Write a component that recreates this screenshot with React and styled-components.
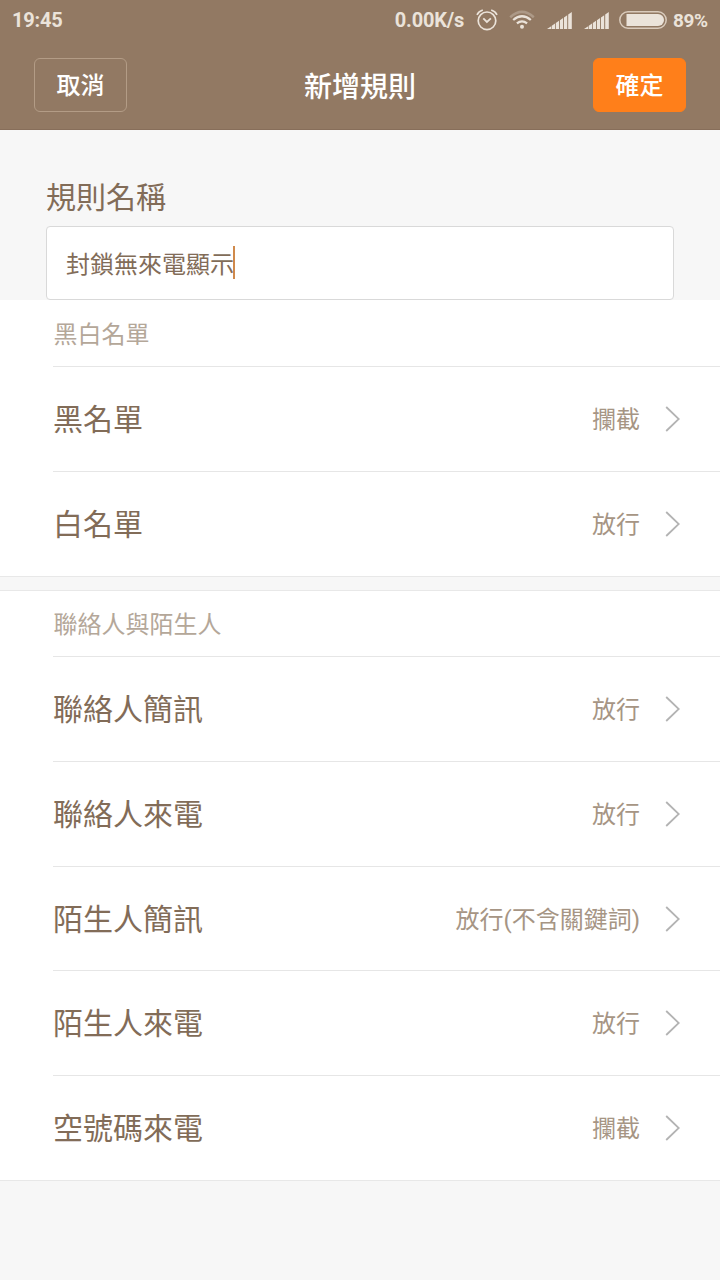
/*
 App.jsx: "New rule" screen of the call and SMS blocking settings.
 Status bar, title bar with the two actions, the rule name field and the rule lists.
 */

import React from 'react';
import styled, { createGlobalStyle } from 'styled-components';

const GlobalStyle = createGlobalStyle`
  * {
    box-sizing: border-box;
  }

  body {
    margin: 0;
    background: #f7f7f7;
    font-family: Roboto, 'Noto Sans CJK TC', sans-serif;
  }
`;

// - Data -

const sections = [
  {
    title: '黑白名單',
    rows: [
      { label: '黑名單', value: '攔截' },
      { label: '白名單', value: '放行' },
    ],
  },
  {
    title: '聯絡人與陌生人',
    rows: [
      { label: '聯絡人簡訊', value: '放行' },
      { label: '聯絡人來電', value: '放行' },
      { label: '陌生人簡訊', value: '放行(不含關鍵詞)' },
      { label: '陌生人來電', value: '放行' },
      { label: '空號碼來電', value: '攔截' },
    ],
  },
];

// - Styled Components -

const Screen = styled.div`
  width: 720px;
  height: 1280px;
  overflow: hidden;
  background: #f7f7f7;
`;

const Header = styled.header`
  height: 130px;
  background: #927963;
  border-bottom: 1px solid #876e5a;
`;

const StatusBar = styled.div`
  display: flex;
  align-items: center;
  justify-content: space-between;
  height: 40px;
  padding: 0 12px;
  color: #ebe3da;
  font-size: 20px;
  font-weight: 700;
  line-height: 41px;
`;

const StatusText = styled.span`
  white-space: nowrap;
  letter-spacing: -0.2px;
`;

const BatteryLevel = styled(StatusText)`
  width: 35px;
  margin-left: 6px;
  font-size: 19px;
  letter-spacing: -0.4px;
`;

const StatusGroup = styled.div`
  display: flex;
  align-items: center;
`;

const StatusIcon = styled.svg`
  display: block;
  flex: none;
  margin-left: ${props => props.$gap || 0}px;
`;

const TitleBar = styled.div`
  display: flex;
  align-items: center;
  justify-content: space-between;
  height: 90px;
  padding: 0 34px;
`;

const Title = styled.h1`
  margin: 0;
  padding-top: 5px;
  color: #fff;
  font-size: 28px;
  font-weight: 500;
  line-height: 40px;
`;

const ActionButton = styled.button`
  width: 93px;
  height: 54px;
  padding: 2px 0 0;
  border: 1px solid ${props => (props.$primary ? '#ff7f1a' : '#b39c86')};
  border-radius: 6px;
  background: ${props => (props.$primary ? '#ff7f1a' : 'transparent')};
  color: #fff;
  font-family: inherit;
  font-size: 24px;
  font-weight: 500;
  line-height: 50px;
`;

const NameForm = styled.div`
  height: 170px;
  padding: 36px 46px 0;
`;

const NameLabel = styled.div`
  height: 60px;
  color: #826c58;
  font-size: 30px;
  line-height: 63px;
`;

const NameField = styled.div`
  display: flex;
  align-items: center;
  height: 74px;
  padding: 0 0 2px 19px;
  border: 1px solid #d9d9d9;
  border-radius: 4px;
  background: #fff;
  color: #826c58;
  font-size: 24px;
`;

const Caret = styled.span`
  width: 2px;
  height: 33px;
  margin-left: -1px;
  background: #d08a4c;
`;

const Section = styled.section`
  background: #fff;
  border-bottom: 1px solid #e8e8e8;

  & + & {
    margin-top: 13px;
    border-top: 1px solid #e8e8e8;
  }
`;

const SectionTitle = styled.div`
  height: ${props => props.$height}px;
  padding-left: 53.5px;
  color: #b4a799;
  font-size: 24px;
  line-height: ${props => props.$lineHeight}px;
`;

const Row = styled.div`
  display: flex;
  align-items: center;
  height: 104.7px;
  margin-left: 53px;
  padding-right: 40px;
  border-top: 1px solid #e6e6e6;
`;

const RowLabel = styled.span`
  flex: 1;
  padding-bottom: 4px;
  color: #826c58;
  font-size: 30px;
`;

const RowValue = styled.span`
  margin-right: 25px;
  padding-bottom: 3px;
  color: #a69584;
  font-size: 24px;
`;

// - Icons -

const AlarmIcon = () => (
  <StatusIcon $gap={12} width="22" height="24" viewBox="0 0 22 24" fill="none" stroke="#ebe3da">
    <circle cx="11" cy="12.8" r="8.8" strokeWidth="1.7" />
    <path d="M7.3 10.3l3.6 3.7 4-3.7" strokeWidth="1.8" />
    <path d="M1 6.8Q2.6 3.4 6.8 2M21 6.8Q19.4 3.4 15.2 2" strokeWidth="1.7" />
  </StatusIcon>
);

const WifiIcon = () => (
  <StatusIcon $gap={11} width="26" height="20" viewBox="0 0 26 20" fill="none" stroke="#ebe3da">
    <path d="M1.2 7.2Q13 -3.4 24.8 7.2" strokeWidth="2.5" opacity="0.3" />
    <path d="M4.2 10Q13 2.4 21.8 10" strokeWidth="2.3" />
    <path d="M7.9 13.4Q13 9.2 18.1 13.4" strokeWidth="2.2" />
    <circle cx="13" cy="16.8" r="2" fill="#ebe3da" stroke="none" />
  </StatusIcon>
);

// Six slanted bars growing from left to right.
const SignalIcon = () => (
  <StatusIcon $gap={12} width="25" height="18" viewBox="0 -0.8 25 18" fill="#ebe3da">
    <path d="M0 17.2L4.2 14.4V17.2zM4.8 14L8 11.8V17.2H4.8zM8.8 11.3L12 9V17.2H8.8zM12.9 8.4L16.1 6.2V17.2H12.9zM17 5.6L20.2 3.4V17.2H17zM21.2 2.7L24.8 .2V17.2H21.2z" />
  </StatusIcon>
);

const BatteryIcon = () => (
  <StatusIcon $gap={10} width="48" height="18" viewBox="0 0 48 18">
    <rect x=".8" y=".8" width="46.4" height="16.4" rx="8.2" fill="none" stroke="#d9cabb" strokeWidth="1.5" />
    <path d="M7.5 3H39a6 6 0 0 1 0 12H7.5z" fill="#ebe3da" />
  </StatusIcon>
);

const Chevron = () => (
  <svg width="15" height="26" viewBox="0 0 15 26" fill="none" stroke="#b3b3b3" strokeWidth="1.8">
    <path d="M1.2 1L13.8 13 1.2 25" />
  </svg>
);

/*
 Displays one group of rules under its title.
    section - Object with the title and the rows of the group
    titleHeight - Height of the title line
    titleLineHeight - Line height that centers the title text
 */
const RuleSection = ({ section, titleHeight, titleLineHeight }) => (
  <Section>
    <SectionTitle $height={titleHeight} $lineHeight={titleLineHeight}>
      {section.title}
    </SectionTitle>
    {section.rows.map(row => (
      <Row key={row.label}>
        <RowLabel>{row.label}</RowLabel>
        <RowValue>{row.value}</RowValue>
        <Chevron />
      </Row>
    ))}
  </Section>
);

const App = () => (
  <>
    <GlobalStyle />
    <Screen>
      <Header>
        <StatusBar>
          <StatusText>19:45</StatusText>
          <StatusGroup>
            <StatusText>0.00K/s</StatusText>
            <AlarmIcon />
            <WifiIcon />
            <SignalIcon />
            <SignalIcon />
            <BatteryIcon />
            <BatteryLevel>89%</BatteryLevel>
          </StatusGroup>
        </StatusBar>
        <TitleBar>
          <ActionButton>取消</ActionButton>
          <Title>新增規則</Title>
          <ActionButton $primary>確定</ActionButton>
        </TitleBar>
      </Header>
      <NameForm>
        <NameLabel>規則名稱</NameLabel>
        <NameField>
          封鎖無來電顯示
          <Caret />
        </NameField>
      </NameForm>
      {sections.map((section, index) => (
        <RuleSection
          key={section.title}
          section={section}
          titleHeight={index === 0 ? 66.4 : 65.6}
          titleLineHeight={index === 0 ? 70 : 68}
        />
      ))}
    </Screen>
  </>
);

export default App;
